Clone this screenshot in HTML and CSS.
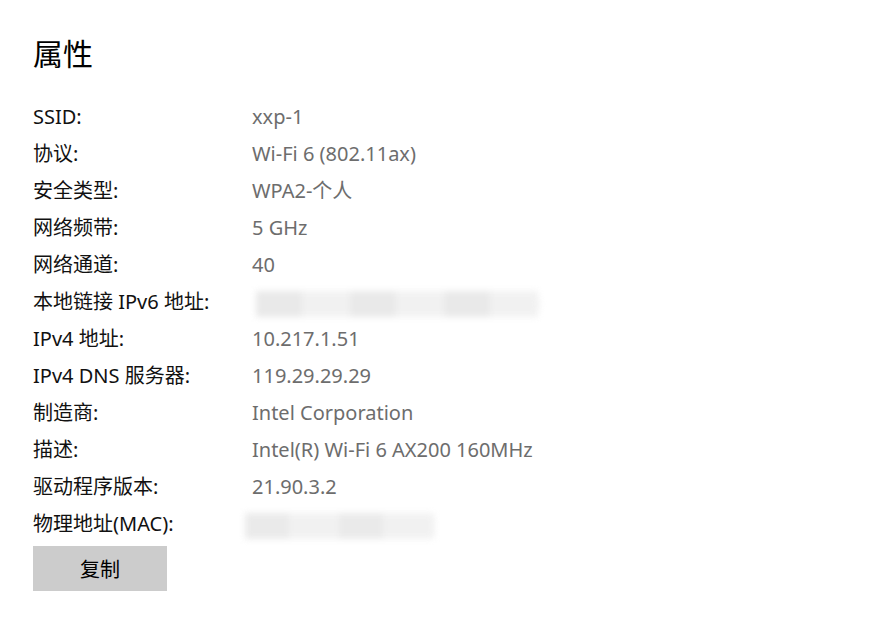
FILE: index.html
```html
<!DOCTYPE html>
<html lang="zh-CN">
  <head>
    <meta charset="UTF-8" />
    <meta name="viewport" content="width=device-width, initial-scale=1.0" />
    <title>属性</title>
    <link rel="stylesheet" href="styles.css">
  </head>
  <body>
    <div class="page">
      <h1 class="title">属性</h1>
      <!-- Elenco proprietà -->
      <div class="props">
        <div class="label">SSID:</div><div class="value">xxp-1</div>
        <div class="label">协议:</div><div class="value">Wi-Fi 6 (802.11ax)</div>
        <div class="label">安全类型:</div><div class="value">WPA2-个人</div>
        <div class="label">网络频带:</div><div class="value">5 GHz</div>
        <div class="label">网络通道:</div><div class="value">40</div>
        <div class="label">本地链接 IPv6 地址:</div>
        <div class="value"><span class="masked masked-long"><i></i><i></i><i></i><i></i><i></i><i></i></span></div>
        <div class="label">IPv4 地址:</div><div class="value">10.217.1.51</div>
        <div class="label">IPv4 DNS 服务器:</div><div class="value">119.29.29.29</div>
        <div class="label">制造商:</div><div class="value">Intel Corporation</div>
        <div class="label">描述:</div><div class="value">Intel(R) Wi-Fi 6 AX200 160MHz</div>
        <div class="label">驱动程序版本:</div><div class="value">21.90.3.2</div>
        <div class="label">物理地址(MAC):</div>
        <div class="value"><span class="masked masked-short"><i></i><i></i><i></i><i></i></span></div>
      </div>
      <button class="copy">复制</button>
    </div>
  </body>
</html>
```

FILE: styles.css
```css
body,
html {
  margin: 0;
  padding: 0;
  background: #fff;
  font-family: "Noto Sans", "Noto Sans CJK SC", sans-serif;
  color: #000;
}

.page {
  padding: 32px 0 0 33px;
}

.title {
  margin: 0 0 26px;
  font-size: 30px;
  line-height: 40px;
  font-weight: normal;
  font-family: "Noto Sans CJK SC", sans-serif;
}

/* Griglia etichetta / valore */
.props {
  display: grid;
  grid-template-columns: 219px auto;
  font-size: 20px;
  line-height: 37px;
}

.label {
  color: #111;
  white-space: nowrap;
}

.value {
  color: #6d6d6d;
  white-space: nowrap;
}

/* Zona sfocata (dati nascosti) */
.masked {
  display: inline-flex;
  vertical-align: middle;
  height: 26px;
  filter: blur(3px);
  opacity: 0.7;
}

.masked i {
  display: block;
  height: 100%;
}

.masked-long {
  margin-left: 4px;
  width: 284px;
  background: #f0f0f0;
  border-radius: 13px;
}

.masked-long i:nth-child(odd) {
  width: 46px;
  background: #e0e0e0;
}

.masked-long i:nth-child(even) {
  width: 48px;
  background: #ececec;
}

.masked-short {
  margin-left: -7px;
  width: 190px;
  background: #f0f0f0;
  border-radius: 6px;
}

.masked-short i:nth-child(odd) {
  width: 44px;
  background: #e2e2e2;
}

.masked-short i:nth-child(even) {
  width: 50px;
  background: #ececec;
}

/* Pulsante Copia */
.copy {
  margin-top: 4px;
  width: 134px;
  height: 45px;
  border: none;
  background: #cccccc;
  color: #000;
  font-size: 20px;
  font-family: "Noto Sans CJK SC", sans-serif;
  cursor: pointer;
}
```
